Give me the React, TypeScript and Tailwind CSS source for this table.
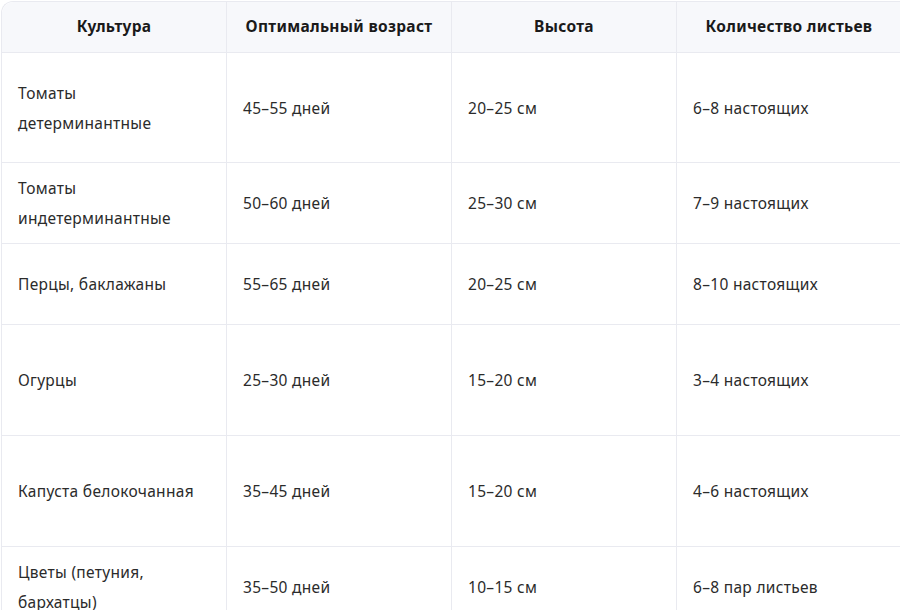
const headers = ["Культура", "Оптимальный возраст", "Высота", "Количество листьев", "Примечание"]

interface Row {
  crop: string[]
  age: string
  height: string
  leaves: string
  h: string
}

const rows: Row[] = [
  { crop: ["Томаты", "детерминантные"], age: "45–55 дней", height: "20–25 см", leaves: "6–8 настоящих", h: "h-[110px]" },
  { crop: ["Томаты", "индетерминантные"], age: "50–60 дней", height: "25–30 см", leaves: "7–9 настоящих", h: "h-[81px]" },
  { crop: ["Перцы, баклажаны"], age: "55–65 дней", height: "20–25 см", leaves: "8–10 настоящих", h: "h-[81px]" },
  { crop: ["Огурцы"], age: "25–30 дней", height: "15–20 см", leaves: "3–4 настоящих", h: "h-[111px]" },
  { crop: ["Капуста белокочанная"], age: "35–45 дней", height: "15–20 см", leaves: "4–6 настоящих", h: "h-[111px]" },
  { crop: ["Цветы (петуния,", "бархатцы)"], age: "35–50 дней", height: "10–15 см", leaves: "6–8 пар листьев", h: "h-[81px]" },
]

const cell = "border-r border-b border-[#e9eaf0] px-4 align-middle leading-[30px] text-[#2b2b2b]"

export default function App() {
  return (
    <div className="w-[900px] h-[610px] overflow-hidden bg-white pl-px pt-px font-['Noto_Sans','Open_Sans',sans-serif]">
      <table className="w-[1126px] table-fixed border-separate border-spacing-0 border-l border-t border-[#e9eaf0] rounded-tl-xl text-[15.5px] tracking-[0.3px]">
        <colgroup>
          <col className="w-[225px]" />
          <col className="w-[225px]" />
          <col className="w-[225px]" />
          <col className="w-[225px]" />
          <col className="w-[225px]" />
        </colgroup>
        <thead>
          <tr className="h-[51px]">
            {headers.map((h, i) => (
              <th
                key={h}
                className={`bg-[#f7f8fb] border-r border-b border-[#e9eaf0] px-2 text-center font-bold text-[#1a1a1a] whitespace-nowrap ${i === 0 ? "rounded-tl-xl" : ""}`}
              >
                {h}
              </th>
            ))}
          </tr>
        </thead>
        <tbody>
          {rows.map((r) => (
            <tr key={r.crop.join(" ")} className={r.h}>
              <td className={cell}>
                {r.crop.map((c) => (
                  <div key={c}>{c}</div>
                ))}
              </td>
              <td className={cell}>{r.age}</td>
              <td className={cell}>{r.height}</td>
              <td className={cell}>{r.leaves}</td>
              <td className={cell}></td>
            </tr>
          ))}
        </tbody>
      </table>
    </div>
  )
}
